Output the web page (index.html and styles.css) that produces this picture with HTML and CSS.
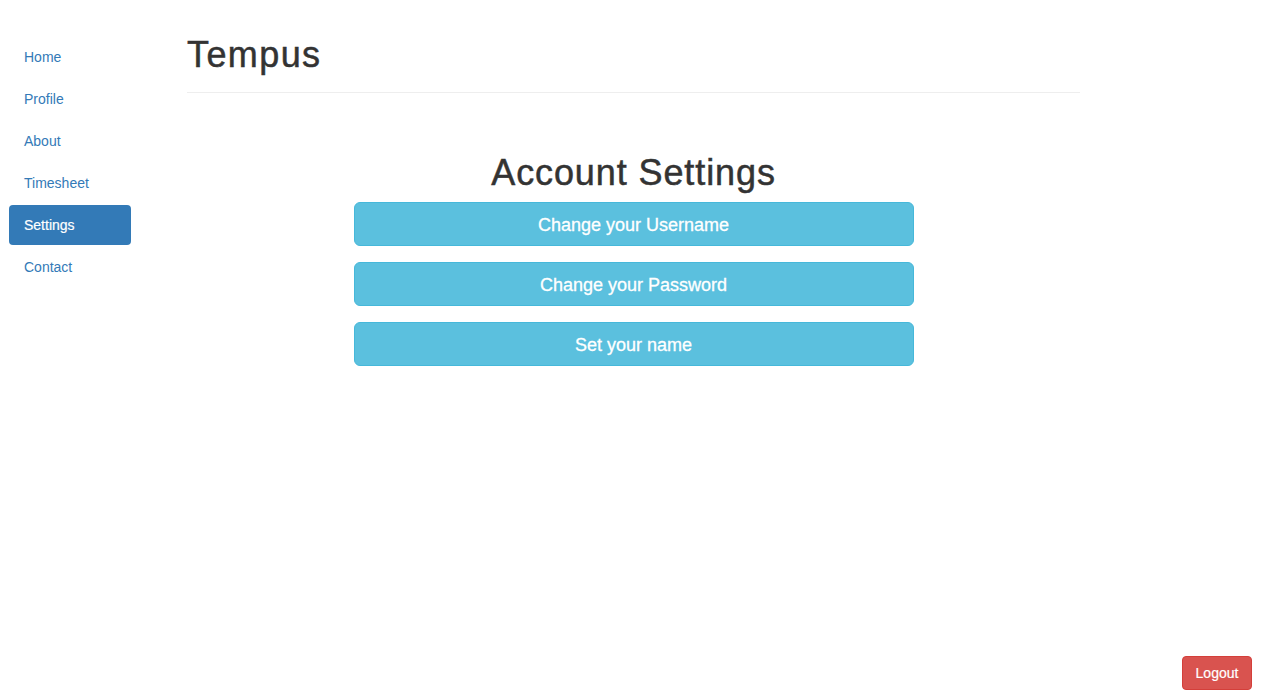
FILE: index.html
```html
<!DOCTYPE html>
<html>
<head>
<meta charset="utf-8">
<title>Tempus</title>
<link rel="stylesheet" href="styles.css">
</head>
<body>
<div class="layout">
  <nav class="sidebar">
    <ul class="nav-pills">
      <li><a href="#">Home</a></li>
      <li><a href="#">Profile</a></li>
      <li><a href="#">About</a></li>
      <li><a href="#">Timesheet</a></li>
      <li class="active"><a href="#">Settings</a></li>
      <li><a href="#">Contact</a></li>
    </ul>
  </nav>
  <main class="main">
    <div class="page-header"><h1 class="title">Tempus</h1></div>
    <section class="settings">
      <h1 class="settings-title">Account Settings</h1>
      <div class="buttons">
        <button class="btn btn-info">Change your Username</button>
        <button class="btn btn-info">Change your Password</button>
        <button class="btn btn-info">Set your name</button>
      </div>
    </section>
  </main>
</div>
<button class="btn-logout">Logout</button>
</body>
</html>
```
FILE: styles.css
```css
* { box-sizing: border-box; }
html, body { margin: 0; padding: 0; background: #fff; }
body {
  font-family: "Liberation Sans", Arial, sans-serif;
  font-size: 14px;
  line-height: 20px;
  color: #333;
}
.layout {
  display: flex;
  align-items: flex-start;
}
.sidebar {
  width: 187px;
  padding: 37px 0 0 9px;
  flex: none;
}
.nav-pills {
  list-style: none;
  margin: 0;
  padding: 0;
  width: 122px;
  display: flex;
  flex-direction: column;
  gap: 2px;
}
.nav-pills a {
  display: block;
  padding: 10px 15px;
  color: #337ab7;
  text-decoration: none;
  border-radius: 4px;
  line-height: 20px;
}
.nav-pills .active a {
  background: #337ab7;
  color: #fff;
  -webkit-text-stroke: 0.2px #fff;
}
.main {
  width: 893px;
  flex: none;
}
.page-header {
  margin-top: 35px;
  padding-bottom: 7px;
  border-bottom: 1px solid #eee;
}
.title {
  margin: 0 0 10px;
  font-size: 36px;
  line-height: 40px;
  font-weight: normal;
  color: #333;
  letter-spacing: 1.4px;
  -webkit-text-stroke: 0.5px #333;
}
.settings {
  display: flex;
  flex-direction: column;
  align-items: center;
}
.settings-title {
  margin: 60px 0 9px;
  font-size: 36px;
  line-height: 40px;
  font-weight: normal;
  color: #333;
  letter-spacing: 0.9px;
  -webkit-text-stroke: 0.5px #333;
}
.buttons {
  width: 560px;
  display: flex;
  flex-direction: column;
  gap: 16px;
}
.btn {
  display: block;
  width: 100%;
  font-family: inherit;
  font-size: 18px;
  line-height: 24px;
  padding: 10px 16px 8px;
  border-radius: 6px;
  cursor: pointer;
}
.btn-info {
  background: #5bc0de;
  border: 1px solid #46b8da;
  color: #fff;
  -webkit-text-stroke: 0.3px #fff;
}
.btn-logout {
  position: fixed;
  right: 14px;
  bottom: 9px;
  width: 70px;
  height: 34px;
  padding: 6px 12px;
  font-family: inherit;
  font-size: 14px;
  line-height: 20px;
  color: #fff;
  background: #d9534f;
  border: 1px solid #d43f3a;
  border-radius: 4px;
  -webkit-text-stroke: 0.2px #fff;
}
```
